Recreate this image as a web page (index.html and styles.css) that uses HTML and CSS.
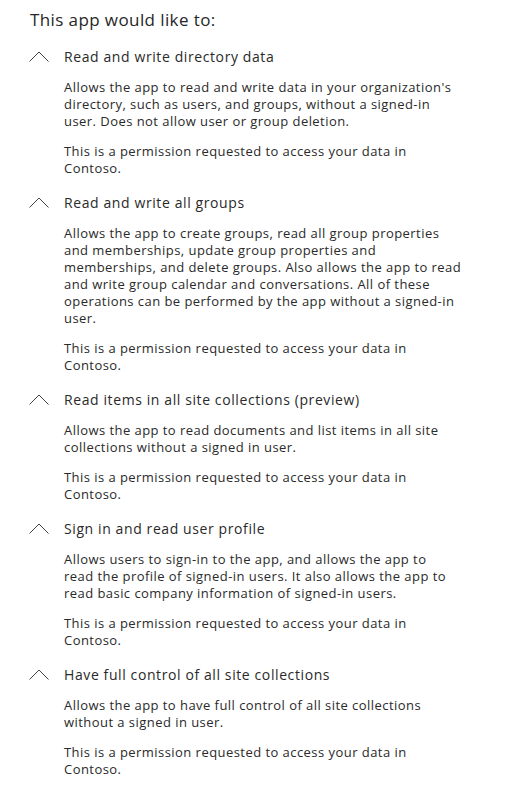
FILE: index.html
```html
<!DOCTYPE html>
<html>
<head>
<meta charset="utf-8">
<link rel="stylesheet" href="styles.css">
</head>
<body>
<div class="consent">
  <h1 class="heading">This app would like to:</h1>
  <ul class="perms">
    <li class="perm">
      <div class="perm-title"><svg class="chev" viewBox="0 0 20 11" width="20" height="11"><path d="M0.5 10.5 L10 1 L19.5 10.5" /></svg><span>Read and write directory data</span></div>
      <p class="perm-text">Allows the app to read and write data in your organization's<br>directory, such as users, and groups, without a signed-in<br>user. Does not allow user or group deletion.</p>
      <p class="perm-text">This is a permission requested to access your data in<br>Contoso.</p>
    </li>
    <li class="perm">
      <div class="perm-title"><svg class="chev" viewBox="0 0 20 11" width="20" height="11"><path d="M0.5 10.5 L10 1 L19.5 10.5" /></svg><span>Read and write all groups</span></div>
      <p class="perm-text">Allows the app to create groups, read all group properties<br>and memberships, update group properties and<br>memberships, and delete groups. Also allows the app to read<br>and write group calendar and conversations. All of these<br>operations can be performed by the app without a signed-in<br>user.</p>
      <p class="perm-text">This is a permission requested to access your data in<br>Contoso.</p>
    </li>
    <li class="perm">
      <div class="perm-title"><svg class="chev" viewBox="0 0 20 11" width="20" height="11"><path d="M0.5 10.5 L10 1 L19.5 10.5" /></svg><span>Read items in all site collections (preview)</span></div>
      <p class="perm-text">Allows the app to read documents and list items in all site<br>collections without a signed in user.</p>
      <p class="perm-text">This is a permission requested to access your data in<br>Contoso.</p>
    </li>
    <li class="perm">
      <div class="perm-title"><svg class="chev" viewBox="0 0 20 11" width="20" height="11"><path d="M0.5 10.5 L10 1 L19.5 10.5" /></svg><span>Sign in and read user profile</span></div>
      <p class="perm-text">Allows users to sign-in to the app, and allows the app to<br>read the profile of signed-in users. It also allows the app to<br>read basic company information of signed-in users.</p>
      <p class="perm-text">This is a permission requested to access your data in<br>Contoso.</p>
    </li>
    <li class="perm">
      <div class="perm-title"><svg class="chev" viewBox="0 0 20 11" width="20" height="11"><path d="M0.5 10.5 L10 1 L19.5 10.5" /></svg><span>Have full control of all site collections</span></div>
      <p class="perm-text">Allows the app to have full control of all site collections<br>without a signed in user.</p>
      <p class="perm-text">This is a permission requested to access your data in<br>Contoso.</p>
    </li>
  </ul>
</div>
</body>
</html>
```
FILE: styles.css
```css
html, body {
  margin: 0;
  padding: 0;
  background: #ffffff;
}
body {
  font-family: "Open Sans", "Noto Sans", sans-serif;
  color: #2a2a2a;
}
.consent {
  padding: 8px 0 0 30px;
}
.heading {
  margin: 0;
  font-size: 17px;
  letter-spacing: 0.4px;
  font-weight: 400;
  line-height: 24px;
  color: #262626;
}
.perms {
  list-style: none;
  margin: 14px 0 0 0;
  padding: 0;
}
.perm {
  margin: 0 0 15px 0;
}
.perm-title {
  display: flex;
  align-items: center;
  height: 20px;
  font-size: 14px;
  letter-spacing: 0.6px;
  margin-bottom: 13px;
}
.chev {
  width: 20px;
  height: 11px;
  margin: 0 15px 0 -1px;
  fill: none;
  stroke: #444444;
  stroke-width: 1;
}
.perm-text {
  margin: 0 0 13px 34px;
  font-size: 13px;
  letter-spacing: 0.45px;
  line-height: 17px;
}
.perm-text:last-child {
  margin-bottom: 0;
}
```
